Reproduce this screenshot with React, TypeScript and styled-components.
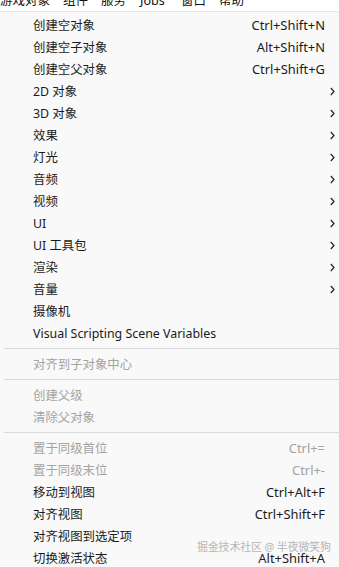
import styled, { createGlobalStyle } from 'styled-components';

const GlobalStyle = createGlobalStyle`
	body {
		margin: 0;
		background: #f9f9f9;
		font-family: 'Noto Sans', 'Noto Sans CJK SC', sans-serif;
		overflow: hidden;
	}
`;

const Page = styled.div`
	position: relative;
	width: 339px;
	height: 567px;
	overflow: hidden;
	background: #f9f9f9;
`;

const MenuBar = styled.div`
	height: 11px;
	overflow: hidden;
	background: #ffffff;
	border-bottom: 1px solid #e6e6e6;
	display: flex;
`;

const MenuBarItem = styled.span<{ $w: number }>`
	width: ${(p) => p.$w}px;
	flex: none;
	margin-top: -7px;
	font-size: 12.5px;
	line-height: 16px;
	color: #111;
	white-space: nowrap;
`;

const Menu = styled.div`
	padding-top: 2px;
	display: flex;
	flex-direction: column;
`;

const Row = styled.div<{ $disabled?: boolean }>`
	height: 22px;
	display: flex;
	align-items: center;
	padding: 0 4px 0 33px;
	font-size: 12.4px;
	color: ${(p) => (p.$disabled ? '#a3a3a3' : '#1b1b1b')};
	white-space: nowrap;
`;

const Label = styled.span`
	flex: 1;
`;

const Shortcut = styled.span`
	margin-right: 10px;
	font-size: 12.9px;
`;

const Separator = styled.div`
	height: 9px;
	display: flex;
	align-items: center;
	padding-left: 4px;
	&::after {
		content: '';
		flex: 1;
		height: 1px;
		background: #dadada;
	}
`;

const Watermark = styled.div`
	position: absolute;
	left: 197px;
	top: 538px;
	font-size: 11px;
	letter-spacing: -0.2px;
	color: rgba(120, 120, 120, 0.55);
	white-space: nowrap;
`;

type Item =
	| { sep: true }
	| { label: string; shortcut?: string; sub?: boolean; disabled?: boolean };

const items: Item[] = [
	{ label: '创建空对象', shortcut: 'Ctrl+Shift+N' },
	{ label: '创建空子对象', shortcut: 'Alt+Shift+N' },
	{ label: '创建空父对象', shortcut: 'Ctrl+Shift+G' },
	{ label: '2D 对象', sub: true },
	{ label: '3D 对象', sub: true },
	{ label: '效果', sub: true },
	{ label: '灯光', sub: true },
	{ label: '音频', sub: true },
	{ label: '视频', sub: true },
	{ label: 'UI', sub: true },
	{ label: 'UI 工具包', sub: true },
	{ label: '渲染', sub: true },
	{ label: '音量', sub: true },
	{ label: '摄像机' },
	{ label: 'Visual Scripting Scene Variables' },
	{ sep: true },
	{ label: '对齐到子对象中心', disabled: true },
	{ sep: true },
	{ label: '创建父级', disabled: true },
	{ label: '清除父对象', disabled: true },
	{ sep: true },
	{ label: '置于同级首位', shortcut: 'Ctrl+=', disabled: true },
	{ label: '置于同级末位', shortcut: 'Ctrl+-', disabled: true },
	{ label: '移动到视图', shortcut: 'Ctrl+Alt+F' },
	{ label: '对齐视图', shortcut: 'Ctrl+Shift+F' },
	{ label: '对齐视图到选定项' },
	{ label: '切换激活状态', shortcut: 'Alt+Shift+A' },
];

const topMenus = [
	{ t: '游戏对象', w: 63 },
	{ t: '组件', w: 38 },
	{ t: '服务', w: 39 },
	{ t: 'Jobs', w: 41 },
	{ t: '窗口', w: 38 },
	{ t: '帮助', w: 40 },
];

const Chevron = () => (
	<svg width="5" height="9" viewBox="0 0 5 9">
		<path d="M0.8 1 L4 4.5 L0.8 8" fill="none" stroke="#222" strokeWidth="1.2" />
	</svg>
);

const App = () => (
	<Page>
		<GlobalStyle />
		<MenuBar>
			{topMenus.map((m, idx) => (
				<MenuBarItem key={idx} $w={m.w}>
					{m.t}
				</MenuBarItem>
			))}
		</MenuBar>
		<Menu>
			{items.map((item, idx) =>
				'sep' in item ? (
					<Separator key={idx} />
				) : (
					<Row key={idx} $disabled={item.disabled}>
						<Label>{item.label}</Label>
						{item.shortcut && <Shortcut>{item.shortcut}</Shortcut>}
						{item.sub && <Chevron />}
					</Row>
				)
			)}
		</Menu>
		<Watermark>掘金技术社区 @ 半夜微笑狗</Watermark>
	</Page>
);

export default App;
